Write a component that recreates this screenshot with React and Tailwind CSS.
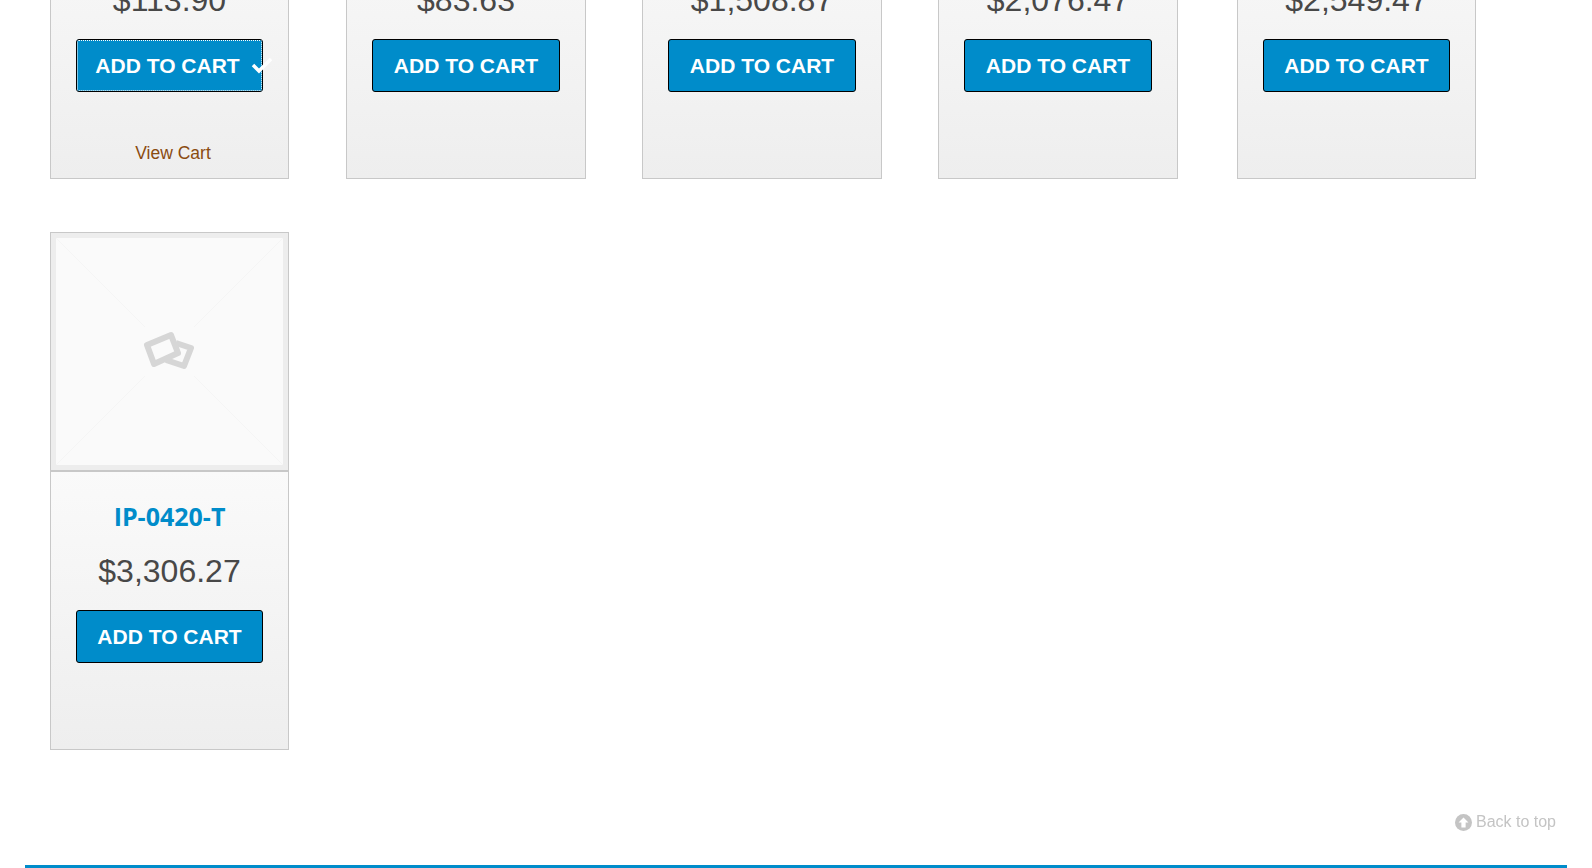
import React from 'react'

const rowOne = [
  { price: '$113.90', added: true, size: 'w-[239px]' },
  { price: '$83.63', size: 'w-[240px] ml-[57px]', wide: true },
  { price: '$1,508.87', size: 'w-[240px] ml-[56px]', wide: true },
  { price: '$2,076.47', size: 'w-[240px] ml-[56px]', wide: true },
  { price: '$2,549.47', size: 'w-[239px] ml-[59px]' },
]

function Placeholder() {
  return (
    <div className="h-[239px] border-b-2 border-[#c8c8c8] bg-[#ededed] p-[5px]">
      <div className="relative h-[227px] bg-[#fafafa]">
        <svg viewBox="0 0 227 227" className="absolute inset-0 h-full w-full" fill="none">
          <path d="M0 0L89 89M227 0L138 89M0 227L89 138M227 227L138 138" stroke="#f5f5f5" />
          <g stroke="#d6d6d6" strokeWidth="6" strokeLinejoin="round">
            <path d="M120 105L135 110L128 128L110 122" />
            <path d="M91 107L115 97L122 115L98 126Z" fill="#fafafa" />
          </g>
        </svg>
      </div>
    </div>
  )
}

function Card({ title, price, added, wide, size }) {
  return (
    <div className={`flex h-[518px] shrink-0 flex-col border border-[#c8c8c8] ${size}`}>
      <Placeholder />
      <div className="flex-1 bg-gradient-to-b from-[#fafafa] to-[#eeeeee] pt-[31px] text-center">
        <div className="h-[26px] text-[25px] leading-[26px] font-bold text-[#008cca] font-['Open_Sans',sans-serif]">{title}</div>
        <div className="mt-[26px] h-[33px] text-[32px] leading-[33px] text-[#484848]">{price}</div>
        <button
          className={`relative mt-[22px] ml-[25px] block h-[53px] rounded-[3px] border border-black bg-[#008cca] text-[21px] font-bold text-white ${wide ? 'w-[188px]' : 'w-[187px]'} ${added ? 'outline-1 -outline-offset-2 outline-dotted outline-white' : ''}`}
        >
          <span className={added ? 'relative -left-[2px]' : ''}>ADD TO CART</span>
          {added && (
            <svg viewBox="0 0 22 18" className="absolute top-[16px] left-[174px] h-[18px] w-[22px]" fill="none">
              <path d="M2 9L8 15L20 3" stroke="#fff" strokeWidth="3.5" />
            </svg>
          )}
        </button>
        {added && <a className="mt-[49px] ml-[7px] block text-[17.5px] leading-[24px] text-[#8a4b10]">View Cart</a>}
      </div>
    </div>
  )
}

export default function App() {
  return (
    <div className="h-screen overflow-hidden bg-white font-['Liberation_Sans',Arial,sans-serif]">
      {/* page is scrolled down, top of the first row sits above the fold */}
      <div className="-mt-[339px] pl-[50px]">
        <div className="flex">
          {rowOne.map(p => <Card key={p.price} price={p.price} added={p.added} wide={p.wide} size={p.size} />)}
        </div>
        <div className="mt-[53px] flex">
          <Card title="IP-0420-T" price="$3,306.27" size="w-[239px]" />
        </div>
      </div>
      <div className="mt-[62px] flex items-center justify-end gap-[4px] pr-[36px] text-[16px] leading-[20px] text-[#c4c4c4] blur-[0.4px]">
        <svg viewBox="0 0 24 24" className="h-[17px] w-[17px]">
          <circle cx="12" cy="12" r="12" fill="#c4c4c4" />
          <path d="M12 5L19 12H15V19H9V12H5Z" fill="#fff" />
        </svg>
        Back to top
      </div>
      <div className="mt-[33px] mr-[25px] ml-[25px] h-[3px] bg-[#008cca]" />
    </div>
  )
}
